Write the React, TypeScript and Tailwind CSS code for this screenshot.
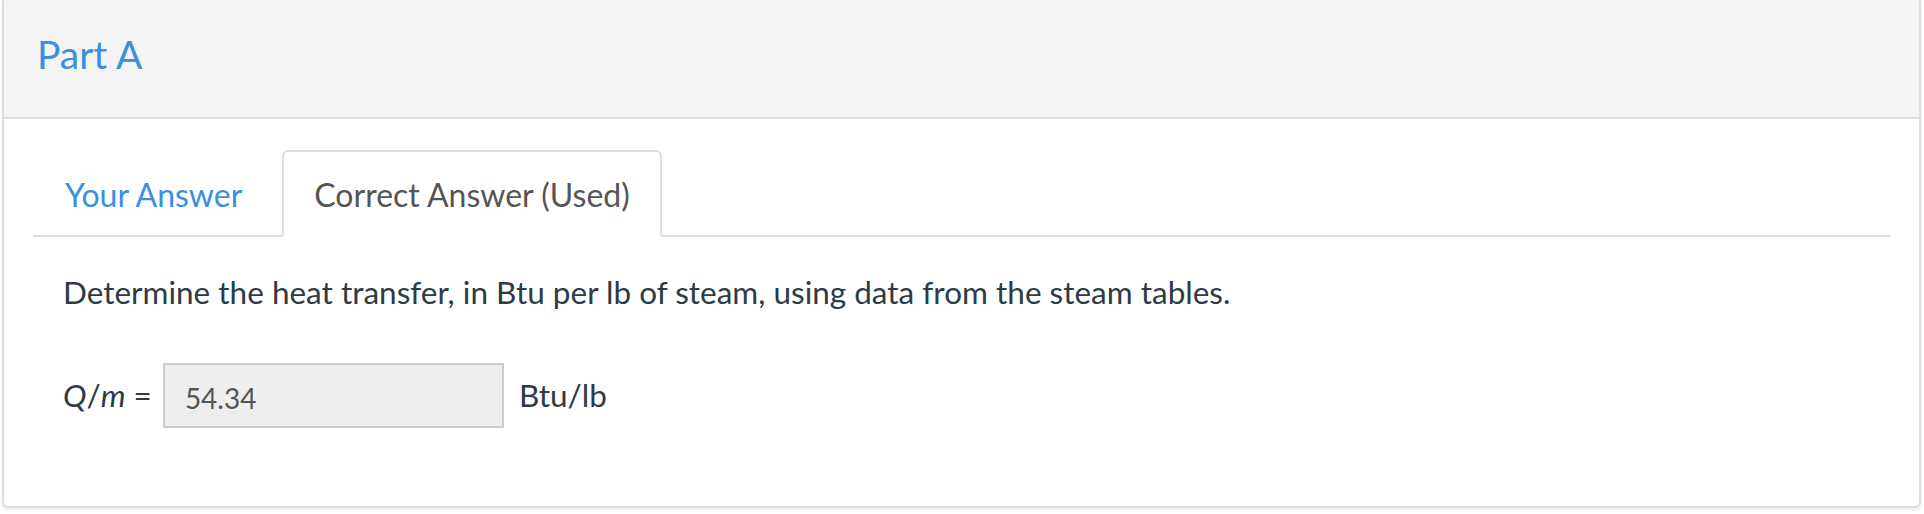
export default function App() {
  return (
    <div className="min-h-screen bg-white pl-[2px] pr-[3px]" style={{ fontFamily: 'Lato, "Open Sans", sans-serif' }}>
      <div className="rounded-b-md border-2 border-t-0 border-[#dddddd] shadow-[0_2px_3px_rgba(0,0,0,0.08)]">
        <div className="h-[119px] border-b-2 border-[#dddddd] bg-[#f4f4f4] pl-[33px] pt-[30px]">
          <h2 className="text-[39px] leading-[48px] font-normal text-[#3b8fdf]">Part A</h2>
        </div>

        <div className="px-[29px] pt-[31px] pb-[78px]">
          <div className="flex border-b-2 border-[#dddddd]">
            <button className="mr-[8px] -mb-[2px] border-2 border-transparent px-[30px] pt-[24px] pb-[21px] text-[32px] leading-[38px] text-[#3b8fdf]">
              Your Answer
            </button>
            <button className="-mb-[2px] rounded-t-md border-2 border-[#dddddd] border-b-white bg-white px-[30px] pt-[24px] pb-[21px] text-[32px] leading-[38px] text-[#555555]">
              Correct Answer (Used)
            </button>
          </div>

          <div className="px-[30px]">
            <p className="mt-[37px] text-[31.5px] leading-[37px] text-[#2d3b45]">
              Determine the heat transfer, in Btu per lb of steam, using data from the steam tables.
            </p>

            <div className="mt-[52px] flex items-center text-[31.5px] leading-[37px] text-[#2d3b45]">
              <span className="mr-[11px]">
                <i>Q</i>/<i>m</i> =
              </span>
              <div className="flex h-[65px] w-[341px] items-center border-2 border-[#cccccc] bg-[#eeeeee] px-[20px] pt-[6px] text-[28px] text-[#555555]">
                54.34
              </div>
              <span className="ml-[15px]">Btu/lb</span>
            </div>
          </div>
        </div>
      </div>
    </div>
  );
}
